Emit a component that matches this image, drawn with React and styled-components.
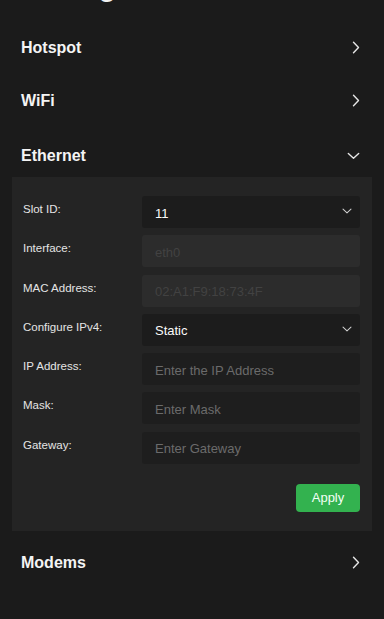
import React, { useState } from "react";
import styled, { createGlobalStyle } from "styled-components";

const GlobalStyle = createGlobalStyle`
    html, body {
        margin: 0;
        padding: 0;
        background: #1b1b1b;
    }
    body {
        font-family: "Liberation Sans", Arial, sans-serif;
        color: #f2f2f2;
        overflow: hidden;
    }
`;

const fields = [
    { label: "Slot ID:", kind: "select", value: "11" },
    { label: "Interface:", kind: "disabled", value: "eth0" },
    { label: "MAC Address:", kind: "disabled", value: "02:A1:F9:18:73:4F" },
    { label: "Configure IPv4:", kind: "select", value: "Static" },
    { label: "IP Address:", kind: "input", placeholder: "Enter the IP Address" },
    { label: "Mask:", kind: "input", placeholder: "Enter Mask" },
    { label: "Gateway:", kind: "input", placeholder: "Enter Gateway" },
];

const ChevronRight = () => (
    <svg width="8" height="13" viewBox="0 0 8 13" fill="none">
        <path d="M1.5 1.2L6.5 6.5L1.5 11.8" stroke="#e6e6e6" strokeWidth="1.4" strokeLinecap="round" strokeLinejoin="round" />
    </svg>
);

const ChevronDown = ({ size = 13, color = "#e6e6e6" }) => (
    <svg width={size} height={size * 0.6} viewBox="0 0 13 8" fill="none">
        <path d="M1.2 1.5L6.5 6.5L11.8 1.5" stroke={color} strokeWidth="1.4" strokeLinecap="round" strokeLinejoin="round" />
    </svg>
);

export default function App() {
    const [open, setOpen] = useState("Ethernet");

    const toggle = (name) => setOpen(open === name ? "" : name);

    const renderField = (f) => {
        if (f.kind === "select") {
            return (
                <SelectBox>
                    <span>{f.value}</span>
                    <ChevronDown size={10} color="#cfcfcf" />
                </SelectBox>
            );
        }
        if (f.kind === "disabled") {
            return <TextInput disabled value={f.value} readOnly dim />;
        }
        return <TextInput placeholder={f.placeholder} />;
    };

    return (
        <>
            <GlobalStyle />
            <Page>
                <Title>Settings</Title>
                <Section onClick={() => toggle("Hotspot")}>
                    <SectionTitle>Hotspot</SectionTitle>
                    <ChevronRight />
                </Section>
                <Section onClick={() => toggle("WiFi")}>
                    <SectionTitle>WiFi</SectionTitle>
                    <ChevronRight />
                </Section>
                <Section expanded onClick={() => toggle("Ethernet")}>
                    <SectionTitle>Ethernet</SectionTitle>
                    {open === "Ethernet" ? <ChevronDown /> : <ChevronRight />}
                </Section>
                {open === "Ethernet" && (
                    <Panel>
                        {fields.map((f) => (
                            <FieldRow key={f.label}>
                                <Label>{f.label}</Label>
                                {renderField(f)}
                            </FieldRow>
                        ))}
                        <Actions>
                            <ApplyButton type="button">Apply</ApplyButton>
                        </Actions>
                    </Panel>
                )}
                <Section last onClick={() => toggle("Modems")}>
                    <SectionTitle>Modems</SectionTitle>
                    <ChevronRight />
                </Section>
            </Page>
        </>
    );
}

const Page = styled.div`
    display: flex;
    flex-direction: column;
    padding: 0 12px;
    height: 619px;
    box-sizing: border-box;
`;

/* large page title, scrolled mostly out of view */
const Title = styled.h1`
    margin: -27px 0 20px 9px;
    height: 28px;
    font-size: 28px;
    line-height: 28px;
    font-weight: 700;
    color: #f2f2f2;
`;

const Section = styled.div`
    display: flex;
    align-items: center;
    justify-content: space-between;
    box-sizing: border-box;
    height: ${({ expanded, last }) => (expanded ? "50px" : last ? "64px" : "53px")};
    padding: ${({ expanded }) => (expanded ? "7px 12px 0 9px" : "0 12px 0 9px")};
    cursor: pointer;
`;

const SectionTitle = styled.span`
    font-size: 16px;
    font-weight: 700;
    color: #f4f4f4;
`;

const Panel = styled.div`
    display: flex;
    flex-direction: column;
    gap: 7.3px;
    background: #242424;
    padding: 19px 12px 19px 11px;
`;

const FieldRow = styled.div`
    display: grid;
    grid-template-columns: 119px 1fr;
    align-items: start;
    height: 32px;
`;

const Label = styled.span`
    font-size: 11.5px;
    color: #e4e4e4;
    padding-top: 7px;
`;

const SelectBox = styled.div`
    display: flex;
    align-items: center;
    justify-content: space-between;
    height: 32px;
    box-sizing: border-box;
    padding: 2px 8px 0 13px;
    background: #1c1c1c;
    border-radius: 3px;
    font-size: 13px;
    color: #fafafa;
    font-weight: 500;

    svg {
        margin-top: -4px;
    }
`;

const TextInput = styled.input`
    height: 32px;
    box-sizing: border-box;
    width: 100%;
    padding: 2px 13px 0;
    border: none;
    outline: none;
    border-radius: 3px;
    background: ${({ dim }) => (dim ? "#2c2c2c" : "#1e1e1e")};
    color: ${({ dim }) => (dim ? "#424242" : "#f2f2f2")};
    font-family: "Liberation Sans", Arial, sans-serif;
    font-size: 13px;

    &::placeholder {
        color: #6b6b6b;
    }

    &:disabled {
        -webkit-text-fill-color: #424242;
    }
`;

const Actions = styled.div`
    display: flex;
    justify-content: flex-end;
    margin-top: 12.7px;
`;

const ApplyButton = styled.button`
    width: 64px;
    height: 28px;
    border: none;
    border-radius: 4px;
    background: #33b24f;
    color: #f4fff6;
    font-family: "Liberation Sans", Arial, sans-serif;
    font-size: 13px;
    cursor: pointer;
`;
